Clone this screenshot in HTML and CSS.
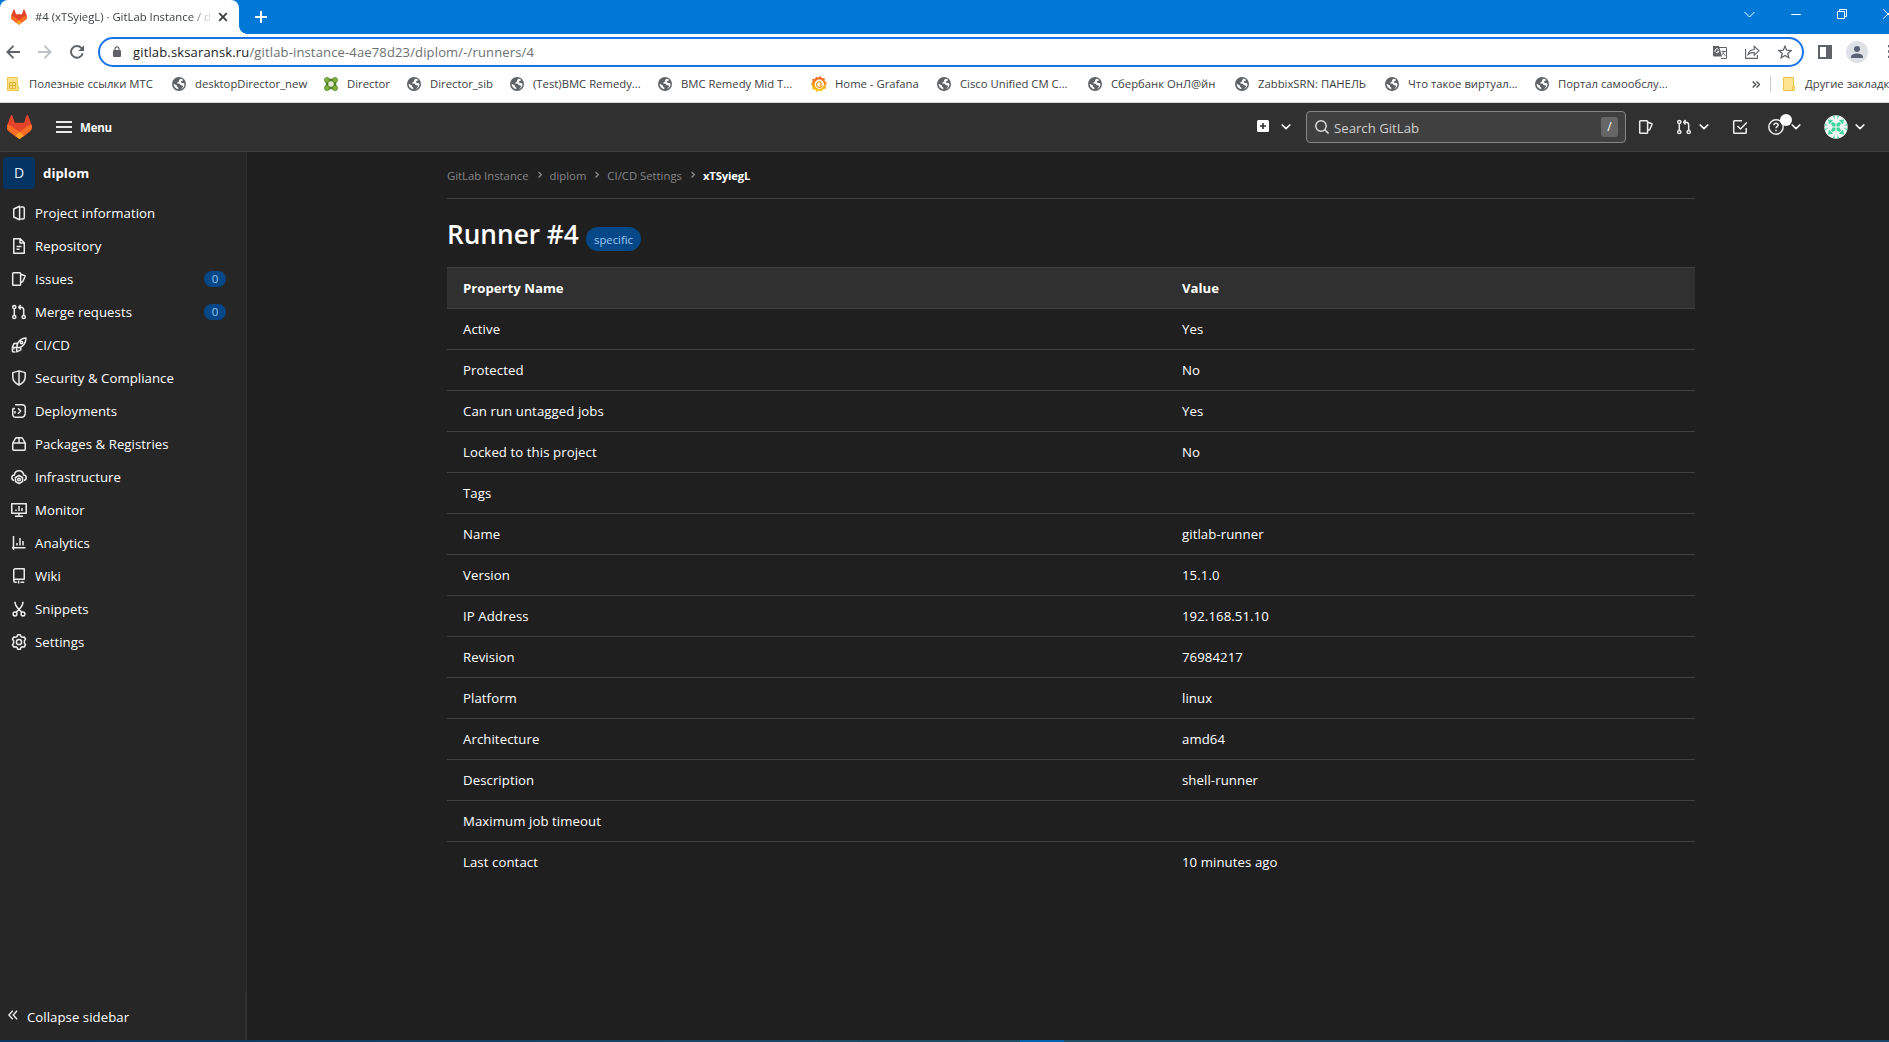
FILE: index.html
```html
<!DOCTYPE html>
<html lang="en">
<head>
<meta charset="utf-8">
<title>#4 (xTSyiegL) · GitLab Instance / diplom</title>
<link rel="stylesheet" href="styles.css">
</head>
<body>
<svg class="defs" aria-hidden="true">
  <symbol id="tanuki" viewBox="0 0 25 24">
    <path fill="#e24329" d="m24.507 9.5-.034-.09L21.082.562a.896.896 0 0 0-1.694.091l-2.29 7.01H7.825L5.535.653a.898.898 0 0 0-1.694-.09L.451 9.411.416 9.5a6.297 6.297 0 0 0 2.09 7.278l.012.01.03.022 5.16 3.867 2.56 1.935 1.554 1.176a1.051 1.051 0 0 0 1.268 0l1.555-1.176 2.56-1.935 5.197-3.89.014-.01A6.297 6.297 0 0 0 24.507 9.5Z"/>
    <path fill="#fc6d26" d="m24.507 9.5-.034-.09a11.44 11.44 0 0 0-4.56 2.051l-7.447 5.632 4.742 3.584 5.197-3.89.014-.01A6.297 6.297 0 0 0 24.507 9.5Z"/>
    <path fill="#fca326" d="m7.707 20.677 2.56 1.935 1.555 1.176a1.051 1.051 0 0 0 1.268 0l1.555-1.176 2.56-1.935-4.743-3.584-4.755 3.584Z"/>
    <path fill="#fc6d26" d="M5.01 11.461a11.43 11.43 0 0 0-4.56-2.05L.416 9.5a6.297 6.297 0 0 0 2.09 7.278l.012.01.03.022 5.16 3.867 4.745-3.584-7.444-5.632Z"/>
  </symbol>
  <symbol id="globe" viewBox="0 0 14 14">
    <circle cx="7" cy="7" r="7" fill="#5f6368"/>
    <path fill="#fff" d="M8.3 1.8 7 3.2l.3 1.2-1.5.7-.6 1.3 2.6.3 1 1.5 1.5.1.8 1.2-1.9 2.4c2.1-.6 3.4-2.500 3.300-4.900l-1-.9-1.700-.1-.9-1.100.5-.8 1.300-.4.3-.9A5.400 5.400 0 0 0 8.300 1.800ZM1.600 6.700c0 2.700 1.800 5 4.700 5.500l.1-1.500-1.300-.9-.2-1.300z"/>
  </symbol>
  <symbol id="caret" viewBox="0 0 10 6"><path d="m1.200 1 3.800 3.600L8.800 1" fill="none" stroke="currentColor" stroke-width="1.700" stroke-linecap="round" stroke-linejoin="round"/></symbol>
  <symbol id="sep" viewBox="0 0 6 8"><path d="m1.500 1 2.800 2.800-2.800 2.800" fill="none" stroke="currentColor" stroke-width="1.400"/></symbol>
  <symbol id="i-project" viewBox="0 0 16 16"><path d="M2.750 4 8.600 1.200v13.600L2.750 12zM9.500 1.900h2.300c.9 0 1.500.6 1.500 1.500v9.200c0 .9-.6 1.500-1.500 1.500H9.500"/></symbol>
  <symbol id="i-doc" viewBox="0 0 16 16"><path d="M2.750.8h6.500l4 4v10.400H2.750zM9 1v4h4M5.500 8.500h5M5.500 11.300h3"/></symbol>
  <symbol id="i-issues" viewBox="0 0 16 16"><path d="M2.500 1.750h6.300c.5 0 .8.300.8.800v10.900c0 .5-.3.800-.8.800H2.500c-.5 0-.8-.3-.8-.8V2.550c0-.5.300-.8.800-.8zM9.700 3.300l3.800 1.200c.4.100.6.600.5 1l-2.300 5.200-2 1"/></symbol>
  <symbol id="i-merge" viewBox="0 0 16 16"><circle cx="3.300" cy="3" r="1.600"/><circle cx="3.300" cy="13" r="1.600"/><circle cx="12.700" cy="13" r="1.600"/><path d="M3.300 4.600v6.800M12.700 11.400V6c0-1.700-1-2.800-2.700-2.800H8M9.600.9 7.700 3.200l1.900 2.200"/></symbol>
  <symbol id="i-rocket" viewBox="0 0 16 16"><path d="M5.800 10.200C5.600 6.500 9 1.200 15 1c.1 5-3.400 8.900-7 9.700zM6.300 6.300 3 6.500 1.300 10.200l4.500.3M9.700 9.800l.1 3-4 2-.3-4.400M3.600 11.500l-2.400.5.400 2.700 2.900.2"/><circle cx="10.500" cy="5.500" r="1.200"/></symbol>
  <symbol id="i-shield" viewBox="0 0 16 16"><path d="M8 .9 14.200 2.600v4.200c0 4-2.400 6.500-6.200 8.300-3.800-1.800-6.200-4.300-6.200-8.300V2.600zM8 1v14"/></symbol>
  <symbol id="i-deploy" viewBox="0 0 16 16"><path d="M4 1.750h7.500a2.750 2.750 0 0 1 2.750 2.750v6M12 14.250H4.500a2.750 2.750 0 0 1-2.750-2.750v-6M1.750 5.500H4M14.250 10.700c-.2 1.800-1.100 3.200-3 3.550M7 5.300l2.700 2.700L7 10.700M4 10.500V8"/></symbol>
  <symbol id="i-package" viewBox="0 0 16 16"><path d="M1.750 7h12.500v6.200c0 .6-.4 1-1 1H2.750c-.6 0-1-.4-1-1zM1.900 6.900l2.500-4.400c.3-.5.700-.8 1.200-.8h4.800c.5 0 1 .3 1.200.8l2.500 4.400M8 1.750V7"/></symbol>
  <symbol id="i-cloud" viewBox="0 0 16 16"><path d="M3.200 11.500C1.800 11.200.8 10.200.8 8.800c0-1.300 1-2.500 2.500-2.700C3.700 3.400 5.500 1.800 8 1.800s4.300 1.600 4.700 4.300c1.500.2 2.500 1.400 2.500 2.700 0 1.400-1 2.400-2.400 2.700M8 6.500l3.500 2v4L8 14.500l-3.500-2v-4z"/><circle cx="8" cy="10.500" r="1.300"/></symbol>
  <symbol id="i-monitor" viewBox="0 0 16 16"><path d="M.75 1.750h14.500v9.500H.75zM8 11.500V14M4 14.250h8M5 9V7.500M8 9V4M11 9V6"/></symbol>
  <symbol id="i-chart" viewBox="0 0 16 16"><path d="M2.500 1v13.800M1 12.750h13.500M6 10.500V8M9 10.500V3M12 10.500V6"/></symbol>
  <symbol id="i-book" viewBox="0 0 16 16"><path d="M2.750 12.600V2.500c0-1 .7-1.750 1.750-1.750h8.750v10.500H4.300c-.9 0-1.550.6-1.550 1.450s.65 1.550 1.550 1.550h1.500M9.500 14.250h3.750M7.600 12.500v3"/></symbol>
  <symbol id="i-scissors" viewBox="0 0 16 16"><circle cx="4" cy="13" r="1.900"/><circle cx="12" cy="13" r="1.900"/><path d="M4 .8c0 3.500 1.700 5.500 4 7.700l2.900 2.900M12 .8c0 3.500-1.700 5.500-4 7.700l-2.900 2.900"/></symbol>
  <symbol id="i-gear" viewBox="0 0 16 16"><path d="M6.700.8h2.600l.6 1.700 1.500.8 1.800-.4 1.300 2.300-1.100 1.500v2.600l1.100 1.500-1.300 2.300-1.800-.4-1.500.8-.6 1.700H6.700l-.6-1.700-1.500-.8-1.800.4-1.300-2.300 1.100-1.500V6.700L1.500 5.200l1.300-2.300 1.800.4 1.500-.8z"/><circle cx="8" cy="8" r="2.600"/></symbol>
  <symbol id="i-todo" viewBox="0 0 16 16"><path d="M10 1.750H2.500c-.5 0-.8.300-.8.800v10.900c0 .5.300.8.800.8h10.900c.5 0 .8-.3.8-.8V9M5.500 7l3 3L14.800 3.500"/></symbol>
  <symbol id="i-help" viewBox="0 0 16 16"><circle cx="8" cy="8" r="7.200"/><path d="M5.900 6.300C5.900 5 6.800 4.300 8 4.300s2.100.8 2.100 1.900c0 1.500-2.100 1.500-2.100 3M8 10.800v1.500"/></symbol>
</svg>

<div class="browser">
  <div class="tabstrip">
    <div class="tab">
      <svg class="tab-logo"><use href="#tanuki"/></svg>
      <span class="tab-title">#4 (xTSyiegL) · GitLab Instance / diplom</span>
      <svg class="tab-close" viewBox="0 0 10 10"><path d="m1.200 1.200 7.600 7.600m0-7.600L1.200 8.800" stroke="#3c4043" stroke-width="1.900"/></svg>
    </div>
    <svg class="newtab" viewBox="0 0 12 12"><path d="M6 0v12M0 6h12" stroke="#fff" stroke-width="2"/></svg>
    <div class="winctl">
      <svg width="11" height="7" viewBox="0 0 11 7"><path d="m.5 1 5 5 5-5"/></svg>
      <svg width="10" height="7" viewBox="0 0 10 7"><path d="M0 3.500h10"/></svg>
      <svg width="10" height="10" viewBox="0 0 10 10"><path d="M.5 2.500h7v7h-7zM2.500 2.500v-2h7v7h-2"/></svg>
      <svg width="10" height="10" viewBox="0 0 10 10"><path d="m.3.300 9.400 9.400m0-9.400L.3 9.700"/></svg>
    </div>
  </div>

  <div class="toolbar">
    <div class="navbtns">
      <svg width="14" height="14" viewBox="0 0 14 14"><path d="M14 7H1.500M7.500.8 1.300 7l6.200 6.200" stroke="#5f6368"/></svg>
      <svg width="14" height="14" viewBox="0 0 14 14"><path d="M0 7h12.500M6.500.8 12.700 7l-6.200 6.200" stroke="#bdc1c6"/></svg>
      <svg width="14" height="14" viewBox="0 0 14 14"><path d="M12.700 8.200A5.900 5.900 0 1 1 11.400 3l1 1.200" stroke="#5f6368"/><path class="tip" d="M14 .3V6H8.300z"/></svg>
    </div>
    <div class="omnibox">
      <svg class="lock" viewBox="0 0 8 11"><path d="M2 5V2.800a2 2 0 0 1 4 0V5" fill="none" stroke="#5f6368" stroke-width="1.200"/><rect y="4" width="8" height="7" rx="1" fill="#5f6368"/></svg>
      <span class="url"><b>gitlab.sksaransk.ru</b>/gitlab-instance-4ae78d23/diplom/-/runners/4</span>
      <div class="omni-icons">
        <svg width="14" height="14" viewBox="0 0 14 14"><path d="M5 2.500h8.500v11H8" fill="none" stroke="#5f6368"/><path d="M0 1h6l3 10.500H1a1 1 0 0 1-1-1z" fill="#5f6368"/><path d="M5.600 4.600a2 2 0 1 0 .3 1.700H4.300" fill="none" stroke="#fff"/><path d="M8.500 6.500H13M10.800 5.500v1c0 1.500-.8 2.700-2 3.500M9.500 7.500l3 3.500" fill="none" stroke="#5f6368" stroke-width=".9"/></svg>
        <svg width="15" height="14" viewBox="0 0 15 14"><path d="M.6 4v9.400h11.800V10M3 9.700c.5-3.500 2.700-5 6.200-5.200V1.300L14 5.800l-4.800 4.400V7.400C6.500 7.400 4.600 8 3 9.700z" fill="none" stroke="#5f6368" stroke-width="1.100"/></svg>
        <svg width="14" height="14" viewBox="0 0 14 14"><path d="m7 1.200 1.700 4 4.400.4-3.300 2.900 1 4.200L7 10.400l-3.800 2.300 1-4.200L.9 5.600l4.400-.4z" fill="none" stroke="#5f6368" stroke-width="1.300"/></svg>
      </div>
    </div>
    <svg class="panel" viewBox="0 0 14 14"><path d="M1 1h12v12H1z" fill="none" stroke="#5f6368" stroke-width="2"/><path d="M8 0h6v14H8z" fill="#5f6368"/></svg>
    <svg class="person" viewBox="0 0 22 22"><circle cx="11" cy="11" r="11" fill="#dee1e6"/><circle cx="11" cy="8" r="3" fill="#5a6275"/><path d="M5 17v-1.200C5 13.700 8.500 12.600 11 12.600s6 1.100 6 3.200V17z" fill="#5a6275"/></svg>
    <svg class="dots" viewBox="0 0 3 13"><path d="M0 1h3M0 6.500h3M0 12h3" stroke="#5f6368" stroke-width="2.400"/></svg>
  </div>

  <div class="bookmarks">
    <div class="bm folder"><svg viewBox="0 0 14 14"><path d="M.5.500h9.800v9h1.200v4h-11z" fill="#ffe08a" stroke="#ecc64b"/><path d="M2.500 5.500h6v6h-6zM2.500 8.500h6M5.500 5.500v6" fill="none" stroke="#e3b536"/></svg><span>Полезные ссылки МТС</span></div>
    <div class="bm"><svg><use href="#globe"/></svg><span>desktopDirector_new</span></div>
    <div class="bm"><svg viewBox="0 0 14 14"><path d="M3 3h8v8H3z" fill="#dfe8cf" stroke="#4f7f24" stroke-width="2.500"/><g fill="#7fb239" stroke="#4a7322" stroke-width=".6"><circle cx="3" cy="3" r="2.600"/><circle cx="11" cy="3" r="2.600"/><circle cx="3" cy="11" r="2.600"/><circle cx="11" cy="11" r="2.600"/></g></svg><span>Director</span></div>
    <div class="bm"><svg><use href="#globe"/></svg><span>Director_sib</span></div>
    <div class="bm"><svg><use href="#globe"/></svg><span>(Test)BMC Remedy...</span></div>
    <div class="bm"><svg><use href="#globe"/></svg><span>BMC Remedy Mid T...</span></div>
    <div class="bm grafana"><svg viewBox="0 0 16 16"><defs><linearGradient id="gf" x1="0" y1="0" x2="0" y2="1"><stop offset="0" stop-color="#f05a28"/><stop offset="1" stop-color="#fcd20b"/></linearGradient></defs><path d="m5 .8 2 .9L9.500 0l1.200 2.100 3 .2v2.800L16 7.300l-1.500 2.300.5 3-2.800.6-1.500 2.300-2.500-1L5.500 16l-1.300-2.300-3-.6.3-2.900L0 8l1.500-2-.4-2.900 2.900-.2z" fill="url(#gf)"/><circle cx="8.300" cy="8.200" r="4.600" fill="#fff"/><path d="M11.500 9.600c-.6 1.300-1.800 2-3.200 1.800-1.700-.2-2.900-1.600-2.700-3.200.2-1.500 1.500-2.500 2.900-2.300 1.200.2 1.900 1.100 1.700 2.200-.1.800-.9 1.300-1.700 1.100" fill="none" stroke="#f79a1e" stroke-width="1.300"/></svg><span>Home - Grafana</span></div>
    <div class="bm"><svg><use href="#globe"/></svg><span>Cisco Unified CM C...</span></div>
    <div class="bm"><svg><use href="#globe"/></svg><span>Сбербанк ОнЛ@йн</span></div>
    <div class="bm"><svg><use href="#globe"/></svg><span>ZabbixSRN: ПАНЕЛЬ</span></div>
    <div class="bm"><svg><use href="#globe"/></svg><span>Что такое виртуал...</span></div>
    <div class="bm"><svg><use href="#globe"/></svg><span>Портал самообслу...</span></div>
    <svg class="more" viewBox="0 0 8 7"><path d="m.7.500 3 3-3 3M4.500.500l3 3-3 3" fill="none" stroke="#4a4d51" stroke-width="1.400"/></svg>
    <div class="bm folder other"><svg viewBox="0 0 14 14"><path d="M.5.500h10v9h1v4h-11z" fill="#ffe48f" stroke="#ecc64b"/><path d="M9.500 13V9.500h1.500" fill="none" stroke="#ecc64b"/></svg><span>Другие закладки</span></div>
  </div>
</div>

<header class="navbar">
  <svg class="brand"><use href="#tanuki"/></svg>
  <div class="burger"><i></i><i></i><i></i></div>
  <span class="menu">Menu</span>
  <div class="nav-right">
    <svg class="plus" viewBox="0 0 12 12"><rect width="12" height="12" rx="1.500" fill="#fff"/><path d="M6 3v6M3 6h6" stroke="#303030" stroke-width="1.600"/></svg>
    <svg class="caret c1"><use href="#caret"/></svg>
    <div class="search">
      <svg viewBox="0 0 14 14"><circle cx="6" cy="6" r="5.200" fill="none" stroke="#dbdbdb" stroke-width="1.500"/><path d="m9.800 9.800 3.700 3.700" stroke="#dbdbdb" stroke-width="1.600"/></svg>
      <span>Search GitLab</span><kbd>/</kbd>
    </div>
    <svg class="ico n-issues"><use href="#i-issues"/></svg>
    <svg class="ico n-merge"><use href="#i-merge"/></svg>
    <svg class="caret c2"><use href="#caret"/></svg>
    <svg class="ico n-todo"><use href="#i-todo"/></svg>
    <div class="help"><svg class="ico"><use href="#i-help"/></svg><span class="dot"></span></div>
    <svg class="caret c3"><use href="#caret"/></svg>
    <svg class="avatar" viewBox="0 0 24 24"><clipPath id="av"><circle cx="12" cy="12" r="11.700"/></clipPath><g clip-path="url(#av)"><path fill="#f4f4f4" d="M0 0h24v24H0z"/><g fill="#3fd6a0"><path d="M7 8.500 8.500 7l3 1.500v3h-3zM17 8.500 15.500 7l-3 1.500v3h3zM7 15.500 8.500 17l3-1.500v-3h-3zM17 15.500 15.500 17l-3-1.500v-3h3z"/><path d="M4 4.500l5 .5-1.500 2L5 9.500zM20 4.500l-5 .5 1.500 2L19 9.500zM4 19.500l5-.5-1.500-2L5 14.500zM20 19.500l-5-.5 1.500-2 2.500-2.500zM8.500 0h2v4.500zM15.500 0h-2v4.500zM8.500 24h2v-4.500zM15.500 24h-2v-4.500zM0 8.500v2l4.500 0zM0 15.500v-2l4.500 0zM24 8.500v2l-4.500 0zM24 15.500v-2l-4.500 0z"/></g></g></svg>
    <svg class="caret c4"><use href="#caret"/></svg>
  </div>
</header>

<div class="layout">
  <aside class="sidebar">
    <div class="context"><span class="tile">D</span><strong>diplom</strong></div>
    <nav>
      <a><svg class="ico"><use href="#i-project"/></svg><span>Project information</span></a>
      <a><svg class="ico"><use href="#i-doc"/></svg><span>Repository</span></a>
      <a><svg class="ico"><use href="#i-issues"/></svg><span>Issues</span><em>0</em></a>
      <a><svg class="ico"><use href="#i-merge"/></svg><span>Merge requests</span><em>0</em></a>
      <a><svg class="ico"><use href="#i-rocket"/></svg><span>CI/CD</span></a>
      <a><svg class="ico"><use href="#i-shield"/></svg><span>Security &amp; Compliance</span></a>
      <a><svg class="ico"><use href="#i-deploy"/></svg><span>Deployments</span></a>
      <a><svg class="ico"><use href="#i-package"/></svg><span>Packages &amp; Registries</span></a>
      <a><svg class="ico"><use href="#i-cloud"/></svg><span>Infrastructure</span></a>
      <a><svg class="ico"><use href="#i-monitor"/></svg><span>Monitor</span></a>
      <a><svg class="ico"><use href="#i-chart"/></svg><span>Analytics</span></a>
      <a><svg class="ico"><use href="#i-book"/></svg><span>Wiki</span></a>
      <a><svg class="ico"><use href="#i-scissors"/></svg><span>Snippets</span></a>
      <a><svg class="ico"><use href="#i-gear"/></svg><span>Settings</span></a>
    </nav>
    <div class="collapse">
      <svg viewBox="0 0 10 10"><path d="M4.800.800.900 5l3.900 4.200M9.100.800 5.200 5l3.900 4.200" fill="none" stroke="#ececec" stroke-width="1.400"/></svg>
      <span>Collapse sidebar</span>
    </div>
  </aside>

  <main>
    <div class="container">
      <div class="crumbs">
        <span>GitLab Instance</span><svg><use href="#sep"/></svg>
        <span>diplom</span><svg><use href="#sep"/></svg>
        <span>CI/CD Settings</span><svg><use href="#sep"/></svg>
        <strong>xTSyiegL</strong>
      </div>
      <div class="title"><h1>Runner #4</h1><span class="badge">specific</span></div>
      <table>
        <thead><tr><th>Property Name</th><th>Value</th></tr></thead>
        <tbody>
          <tr><td>Active</td><td>Yes</td></tr>
          <tr><td>Protected</td><td>No</td></tr>
          <tr><td>Can run untagged jobs</td><td>Yes</td></tr>
          <tr><td>Locked to this project</td><td>No</td></tr>
          <tr><td>Tags</td><td></td></tr>
          <tr><td>Name</td><td>gitlab-runner</td></tr>
          <tr><td>Version</td><td>15.1.0</td></tr>
          <tr><td>IP Address</td><td>192.168.51.10</td></tr>
          <tr><td>Revision</td><td>76984217</td></tr>
          <tr><td>Platform</td><td>linux</td></tr>
          <tr><td>Architecture</td><td>amd64</td></tr>
          <tr><td>Description</td><td>shell-runner</td></tr>
          <tr><td>Maximum job timeout</td><td></td></tr>
          <tr><td>Last contact</td><td>10 minutes ago</td></tr>
        </tbody>
      </table>
    </div>
  </main>
</div>
<div class="taskbar"><i></i></div>
</body>
</html>
```

FILE: styles.css
```css
* { box-sizing: border-box; }
body {
  margin: 0;
  height: 1042px;
  display: flex;
  flex-direction: column;
  overflow: hidden;
  background: #1f1f1f;
  color: #fff;
  font: 13.2px/20px "Open Sans", "Noto Sans", sans-serif;
}
svg { display: block; flex: none; }
.defs { position: absolute; width: 0; height: 0; }

/* Browser window */
.browser { flex: none; height: 103px; background: #fff; border-bottom: 1px solid #d5d5d5; color: #3c4043; font-size: 11.3px; }
.tabstrip { height: 34px; display: flex; background: #0078d7; }
.tab { width: 239px; height: 34px; display: flex; align-items: center; background: #fff; border-radius: 8px 8px 0 0; padding-left: 11px; position: relative; }
.tab::after { content: ""; position: absolute; left: 239px; bottom: 0; width: 8px; height: 8px; background: radial-gradient(circle at 100% 0, #0078d7 7.500px, #fff 8px); }
.tab-logo { width: 16px; height: 16px; }
.tab-title { margin-left: 8px; width: 176px; white-space: nowrap; overflow: hidden; -webkit-mask-image: linear-gradient(90deg, #000 155px, transparent 178px); }
.tab-close { width: 10px; height: 10px; margin-left: 7px; }
.newtab { width: 12px; height: 12px; margin: 11px 0 0 16px; }
.winctl { margin-left: auto; margin-right: -4px; display: flex; align-items: center; gap: 36px; height: 28px; }
.winctl path { fill: none; stroke: #fff; }

.toolbar { height: 35px; display: flex; align-items: center; }
.navbtns { flex: none; width: 98px; padding-left: 6px; display: flex; gap: 18px; }
.navbtns path { fill: none; stroke-width: 1.900; }
.navbtns .tip { fill: #5f6368; stroke: none; }
.omnibox { flex: none; width: 1706px; height: 30px; border: 2px solid #1a73e8; border-radius: 15px; display: flex; align-items: center; }
.lock { width: 8px; height: 11px; margin-left: 13px; }
.url { margin-left: 12px; font-size: 13px; letter-spacing: .15px; color: #6b6f73; }
.url b { font-weight: 400; color: #202124; }
.omni-icons { margin: 0 10px 0 auto; display: flex; gap: 18px; }
.panel { width: 14px; height: 14px; margin-left: 14px; }
.person { width: 22px; height: 22px; margin-left: 14px; }
.dots { width: 3px; height: 13px; margin-left: 20px; }

.bookmarks {
  height: 30px;
  padding-left: 7px;
  display: grid;
  grid-template-columns: 165px 152px 83px 103px 148px 153px 126px 151px 147px 150px 150px 217px 18px 140px;
  align-items: center;
}
.bm { display: flex; align-items: center; white-space: nowrap; }
.bm svg { width: 14px; height: 14px; margin-right: 9px; }
.bm.folder svg { margin-right: 8px; }
.bm.grafana svg { width: 16px; height: 16px; margin-right: 8px; }
.more { width: 8px; height: 7px; }
.other { height: 16px; border-left: 1px solid #ccc; padding-left: 12px; }

/* Top navigation */
.navbar { flex: none; height: 49px; display: flex; align-items: center; background: #303030; border-bottom: 1px solid #404040; color: #fff; }
.brand { width: 25px; height: 24px; margin-left: 7px; }
.burger { width: 16px; margin-left: 24px; display: grid; gap: 3px; }
.burger i { height: 2px; background: #e8e8e8; }
.menu { margin-left: 8px; padding-top: 2px; font-weight: 700; font-size: 11.500px; letter-spacing: -.2px; color: #fafafa; }
.nav-right { margin-left: auto; display: flex; align-items: center; height: 48px; }
.plus { width: 12px; height: 12px; margin-bottom: 2px; }
.caret { width: 10px; height: 6px; color: #fafafa; }
.c1 { margin-left: 12px; }
.search { width: 320px; height: 32px; margin: 0 0 0 15px; border: 1px solid #868686; border-radius: 4px; background: #404040; display: flex; align-items: center; padding: 0 7px 0 8px; color: #d0d0d0; }
.search svg { width: 14px; height: 14px; margin-right: 5px; }
.search span { padding-top: 2px; }
.search kbd { margin-left: auto; width: 17px; height: 20px; border-radius: 3px; background: #666; color: #fff; text-align: center; font: 12px/20px "Open Sans", sans-serif; }
.ico { width: 16px; height: 16px; fill: none; stroke: #ececec; stroke-width: 1.500; stroke-linejoin: round; }
.n-issues { margin-left: 12px; }
.n-merge { margin-left: 22px; }
.c2 { margin-left: 7px; }
.n-todo { margin-left: 23px; }
.help { margin-left: 20px; position: relative; }
.dot { position: absolute; left: 12px; top: -5px; width: 12px; height: 12px; border-radius: 50%; background: #fff; }
.c3 { margin-left: 7px; }
.avatar { width: 24px; height: 24px; margin-left: 23px; }
.c4 { margin: 0 24px 0 7px; }

/* Page body */
.layout { flex: 1; display: flex; min-height: 0; }
.sidebar { flex: none; width: 247px; background: #262626; border-right: 1px solid #303030; display: flex; flex-direction: column; letter-spacing: .05px; }
.context { height: 44px; padding: 5px 0 0 3px; display: flex; gap: 8px; line-height: 32px; }
.tile { width: 32px; height: 32px; border-radius: 4px; background: #033464; text-align: center; font-size: 14px; color: #e9f3fc; }
.context strong { font-size: 13.200px; }
nav a { height: 33px; padding-left: 11px; display: flex; align-items: center; gap: 8px; }
nav em { margin: 0 20px 0 auto; width: 22px; height: 16px; border-radius: 8px; background: #064787; color: #9dc7f1; font: 11.500px/16px "Open Sans", sans-serif; text-align: center; }
.collapse { margin-top: auto; height: 48px; padding-left: 8px; display: flex; align-items: center; gap: 9px; border-right: 1px solid #303030; }
.collapse svg { width: 10px; height: 10px; margin-bottom: 2px; }
.collapse span { padding-top: 2px; }

main { flex: 1; display: flex; padding-left: 200px; }
.container { width: 1248px; }
.crumbs { height: 47px; padding-top: 2px; border-bottom: 1px solid #404040; display: flex; align-items: center; font-size: 11.300px; color: #868686; }
.crumbs svg { width: 6px; height: 8px; margin: 0 7px 2px 8px; }
.crumbs strong { color: #fff; letter-spacing: -.15px; }
.title { height: 68px; display: flex; padding-top: 17px; }
h1 { margin: 0; font-size: 26.200px; line-height: 36px; font-weight: 600; width: 132px; white-space: nowrap; }
.badge { margin: 11px 0 0 7px; width: 55px; height: 24px; border-radius: 12px; background: #064787; color: #9dc7f1; font-size: 11.300px; line-height: 25px; text-align: center; }
table { width: 1248px; border-collapse: collapse; table-layout: fixed; letter-spacing: .08px; }
th, td { height: 41px; padding: 0 16px 1px; text-align: left; border-top: 1px solid #404040; }
th:first-child { width: 719px; }
th { background: #303030; font-weight: 700; letter-spacing: 0; }
.taskbar { flex: none; height: 2px; display: flex; justify-content: center; background: linear-gradient(90deg, #0a3560, #1f4f66 55%, #17466a); }
.taskbar i { width: 44px; margin-left: 195px; background: #0063b1; }
```
